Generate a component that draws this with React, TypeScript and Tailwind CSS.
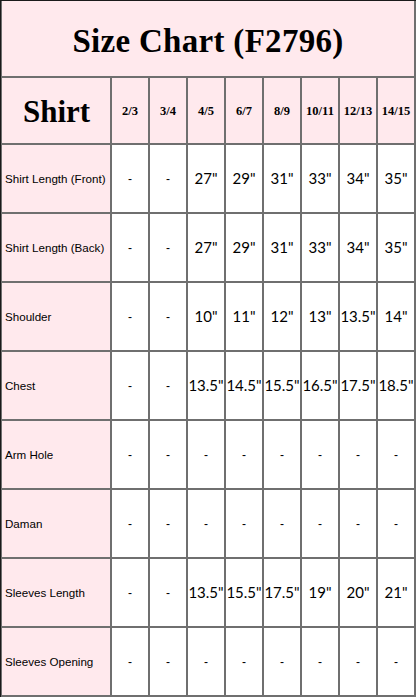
import React from "react";

const sizes = ["2/3", "3/4", "4/5", "6/7", "8/9", "10/11", "12/13", "14/15"];

const rows: { label: string; values: string[] }[] = [
  { label: "Shirt Length (Front)", values: ["-", "-", '27"', '29"', '31"', '33"', '34"', '35"'] },
  { label: "Shirt Length (Back)", values: ["-", "-", '27"', '29"', '31"', '33"', '34"', '35"'] },
  { label: "Shoulder", values: ["-", "-", '10"', '11"', '12"', '13"', '13.5"', '14"'] },
  { label: "Chest", values: ["-", "-", '13.5"', '14.5"', '15.5"', '16.5"', '17.5"', '18.5"'] },
  { label: "Arm Hole", values: ["-", "-", "-", "-", "-", "-", "-", "-"] },
  { label: "Daman", values: ["-", "-", "-", "-", "-", "-", "-", "-"] },
  { label: "Sleeves Length", values: ["-", "-", '13.5"', '15.5"', '17.5"', '19"', '20"', '21"'] },
  { label: "Sleeves Opening", values: ["-", "-", "-", "-", "-", "-", "-", "-"] },
];

export default function App() {
  return (
    <div className="w-[416px] h-[697px] bg-white overflow-hidden">
      <div className="grid grid-cols-[108px_repeat(8,1fr)] grid-rows-[75px_65px_repeat(8,67px)] gap-[2px] bg-[#6f6f6f] pl-[1px] pr-[2px] pb-[2px] border-l-[1px] border-t-[1px] border-[#1a1a1a] w-[416px]">
        <div className="col-span-9 bg-[#ffe9ed] flex items-center justify-center pt-[6px]">
          <span className="font-['Liberation_Serif',serif] font-bold text-[33px] text-black leading-none tracking-[0.3px]">
            Size Chart (F2796)
          </span>
        </div>
        <div className="bg-[#ffe9ed] flex items-center pl-[21px] pt-[2px]">
          <span className="font-['Liberation_Serif',serif] font-bold text-[31px] text-black leading-none">Shirt</span>
        </div>
        {sizes.map((s) => (
          <div key={s} className="bg-[#ffe9ed] flex items-center justify-center pt-[2px]">
            <span className="font-['Liberation_Serif',serif] font-bold text-[12.5px] text-black">{s}</span>
          </div>
        ))}
        {rows.map((r) => (
          <React.Fragment key={r.label}>
            <div className="bg-[#ffe9ed] flex items-center pl-[3px]">
              <span className="font-['Liberation_Sans',sans-serif] text-[11.6px] text-black whitespace-nowrap">{r.label}</span>
            </div>
            {r.values.map((v, i) => (
              <div key={i} className="bg-white flex items-center justify-center">
                {v === "-" ? (
                  <span className="font-['Liberation_Sans',sans-serif] text-[12px] text-black">-</span>
                ) : (
                  <span className="font-['Lato',sans-serif] text-[15px] text-black whitespace-nowrap">{v}</span>
                )}
              </div>
            ))}
          </React.Fragment>
        ))}
      </div>
    </div>
  );
}
